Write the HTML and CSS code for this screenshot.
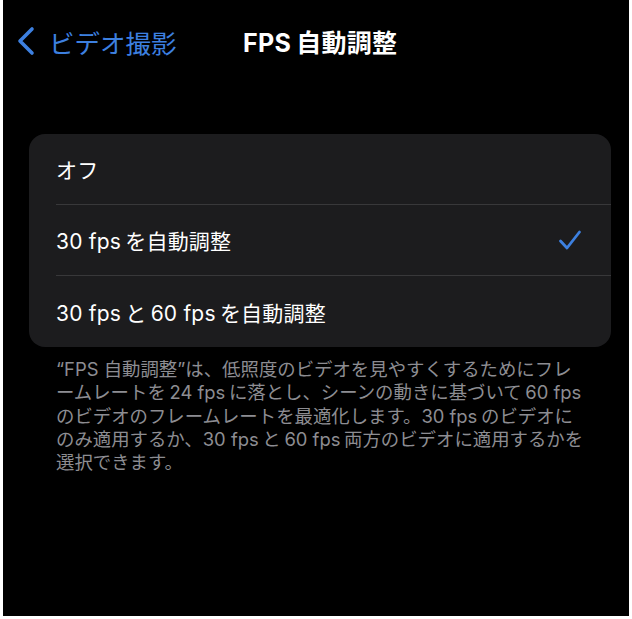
FILE: index.html
```html
<!DOCTYPE html>
<html lang="ja">
<head>
    <meta charset="utf-8">
    <meta name="viewport" content="width=device-width, initial-scale=1">
    <title>FPS自動調整</title>
    <link rel="stylesheet" href="styles.css">
</head>
<body>
    <div class="screen">
        <header class="nav">
            <a class="nav-back" href="#">
                <svg class="chevron" width="20" height="30" viewBox="0 0 20 30">
                    <path d="M16 3 L4 15 L16 27" fill="none" stroke="currentColor" stroke-width="3.6" stroke-linecap="round" stroke-linejoin="round"/>
                </svg>
                <span>ビデオ撮影</span>
            </a>
            <h1 class="nav-title">FPS<span class="gap"></span>自動調整</h1>
        </header>

        <ul class="group">
            <li class="row"><span>オフ</span></li>
            <li class="row selected">
                <span>30 fps<span class="gap"></span>を自動調整</span>
                <svg class="check" width="24" height="22" viewBox="0 0 24 22">
                    <path d="M2.5 12 L9 19 L21.5 3" fill="none" stroke="currentColor" stroke-width="2.8" stroke-linecap="round" stroke-linejoin="round"/>
                </svg>
            </li>
            <li class="row"><span>30 fps<span class="gap"></span>と<span class="gap"></span>60 fps<span class="gap"></span>を自動調整</span></li>
        </ul>

        <p class="footnote">
            “FPS 自動調整”は、低照度のビデオを見やすくするためにフレ<br>
            ームレートを<span class="gap"></span>24 fps<span class="gap"></span>に落とし、シーンの動きに基づいて<span class="gap"></span>60 fps<br>
            のビデオのフレームレートを最適化します。30 fps<span class="gap"></span>のビデオに<br>
            のみ適用するか、30 fps<span class="gap"></span>と<span class="gap"></span>60 fps<span class="gap"></span>両方のビデオに適用するかを<br>
            選択できます。
        </p>
    </div>
</body>
</html>
```

FILE: styles.css
```css
* {
    margin: 0;
    padding: 0;
    box-sizing: border-box;
}

html, body {
    height: 100%;
}

body {
    background: #fff;
    padding: 0 3px 3px 3px;
    font-family: Inter, "Noto Sans CJK JP", sans-serif;
    color: #fff;
}

.screen {
    background: #000;
    height: 100%;
    padding-top: 22px;
}

.gap {
    display: inline-block;
    width: 0.2em;
}

/* navigation bar */
.nav {
    display: flex;
    align-items: center;
    height: 38px;
    padding-left: 13px;
}

.nav-back {
    display: flex;
    align-items: center;
    gap: 13px;
    color: #3d80e0;
    text-decoration: none;
    font-size: 25.5px;
    width: 227px;
}

.chevron {
    flex: none;
}

.nav-title {
    font-size: 25px;
    font-weight: 700;
    letter-spacing: 0.3px;
}

/* option list */
.group {
    list-style: none;
    background: #1c1c1e;
    border-radius: 16px;
    margin: 74px 18px 0 26px;
    padding-left: 27px;
}

.row {
    display: flex;
    align-items: center;
    justify-content: space-between;
    height: 71px;
    padding-right: 29px;
    font-size: 21px;
    letter-spacing: 0.2px;
    border-bottom: 1px solid #38383a;
}

.row:last-child {
    border-bottom: none;
}

.check {
    color: #3d80e0;
}

/* explanatory text */
.footnote {
    margin: 11px 26px 0 53px;
    font-size: 18.4px;
    line-height: 23.3px;
    color: #8d8d92;
}
```
